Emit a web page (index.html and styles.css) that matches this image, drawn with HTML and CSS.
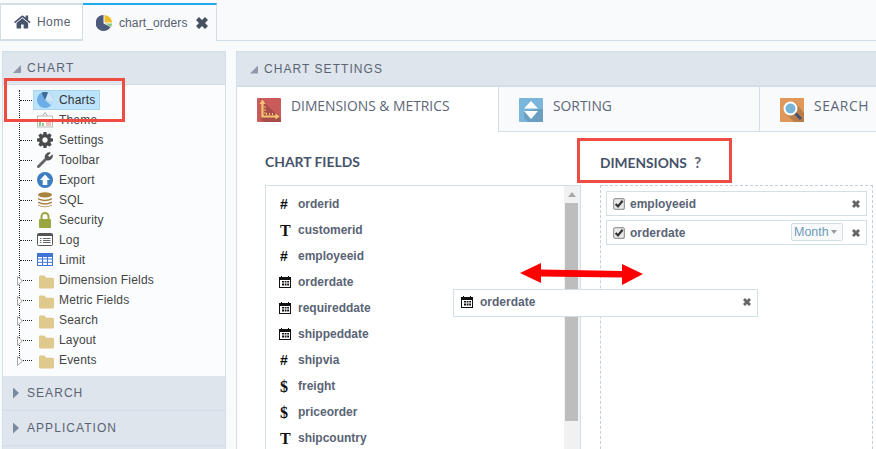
FILE: index.html
```html
<!DOCTYPE html>
<html lang="en">
<head>
<meta charset="utf-8">
<title>chart_orders</title>
<link rel="stylesheet" href="styles.css">
</head>
<body>
<svg class="defs" width="0" height="0">
  <symbol id="x" viewBox="0 0 12 12"><path d="M3 0 6 3 9 0 12 3 9 6 12 9 9 12 6 9 3 12 0 9 3 6 0 3Z"/></symbol>
  <symbol id="folder" viewBox="0 0 16 14"><path d="M0 1.500Q0 0 1.500 0H5Q6 0 7 1.500L7.600 2.500H14.500Q16 2.500 16 4V12.500Q16 14 14.500 14H1.500Q0 14 0 12.500Z" fill="#e0c98c"/></symbol>
  <symbol id="cal" viewBox="0 0 12 12"><path d="M0 1H2V0H3V1H9V0H10V1H12V12H0ZM1 4V11H11V4Z" fill="#111"/><path d="M3 5H5V6.500H3ZM5.700 5H7.500V6.500H5.700ZM8.200 5H10V6.500H8.200ZM3 7.500H5V9.500H3ZM5.700 7.500H7.500V9.500H5.700ZM8.200 7.500H10V9.500H8.200Z" fill="#111"/></symbol>
  <symbol id="chk" viewBox="0 0 12 12"><rect x=".6" y=".6" width="10.800" height="10.800" rx="2" fill="#e9e9e9" stroke="#9a9a9a" stroke-width="1.200"/><path d="M2.600 6 5 8.400 9.600 2.800" fill="none" stroke="#333" stroke-width="2.200"/></symbol>
  <symbol id="exp" viewBox="0 0 6 10"><path d="M.5 .5 5.500 5 .5 9.500Z" fill="#fff" stroke="#a8a8a8"/></symbol>
</svg>

<header class="tabs">
  <div class="tab tab-home">
    <svg class="ico-home" viewBox="0 0 1792 1792"><path fill="#47536b" d="M1408 992v480q0 26-19 45t-45 19h-384v-384h-256v384h-384q-26 0-45-19t-19-45v-480q0-1 .5-3t.5-3l575-474 575 474q1 2 1 6zm223-69l-62 74q-8 9-21 11h-3q-13 0-21-7l-692-577-692 577q-12 8-24 7-13-2-21-11l-62-74q-8-10-7-23.5t11-22.5l719-599q32-26 76-26t76 26l244 204v-195q0-14 9-23t23-9h192q14 0 23 9t9 23v408l219 182q10 8 11 22t-7 23z"/></svg>
    <span>Home</span>
  </div>
  <div class="tab tab-chart">
    <svg class="ico-pie" viewBox="0 0 16 16"><path fill="#4d5a7c" d="M7.500 0V8.500L14.500 12A8 8 0 1 1 7.500 0Z"/><path fill="#eebd2b" d="M8.500 0A8 8 0 0 1 16 7.500H8.500Z"/><path fill="#84c77a" d="M9 8.500H16A8 8 0 0 1 15 12Z"/></svg>
    <span>chart_orders</span>
    <svg class="x-tab"><use href="#x"/></svg>
  </div>
</header>

<main class="main">
  <aside class="side">
    <div class="bar bar-open"><i class="tri-open"></i>CHART</div>
    <ul class="tree">
      <li class="node"><span class="label sel"><svg class="ni" viewBox="0 0 16 16"><circle cx="8" cy="8" r="8" fill="#6cade8"/><path d="M8 8 11 .6A8 8 0 0 1 15.800 10Z" fill="#d2e5f8"/><path d="M8 8 4.500 .8A8 8 0 0 1 11 .6Z" fill="#3d6a96"/><path d="M8 8 15.800 10A8 8 0 0 1 14 13.300Z" fill="#bde3fb"/></svg>Charts</span></li>
      <li class="node"><span class="label"><svg class="ni" viewBox="0 0 16 16"><path d="M8 .5 5.500 4M8 .5 10.500 4" stroke="#aaa" fill="none"/><rect x=".5" y="4" width="15" height="11" fill="#fff" stroke="#bbb"/><path d="M2 9h2v5H2zM5 11h2v3H5z" fill="#8fc98f"/><path d="M9 9h5M9 11h5M9 13h5" stroke="#e58a7c"/></svg>Theme</span></li>
      <li class="node"><span class="label"><svg class="ni" viewBox="128 128 1536 1536"><path fill="#4a4a4a" d="M1152 896q0-106-75-181t-181-75-181 75-75 181 75 181 181 75 181-75 75-181zm512-109v222q0 12-8 23t-20 13l-185 28q-19 54-39 91 35 50 107 138 10 12 10 25t-9 23q-27 37-99 108t-94 71q-12 0-26-9l-138-108q-44 23-91 38-16 136-29 186-7 28-36 28h-222q-14 0-24.500-8.500t-11.500-21.500l-28-184q-49-16-90-37l-141 107q-10 9-25 9-14 0-25-11-126-114-165-168-7-10-7-23 0-12 8-23 15-21 51-66.500t54-70.500q-27-50-41-99l-183-27q-13-2-21-12.500t-8-23.500v-222q0-12 8-23t19-13l186-28q14-46 39-92-40-57-107-138-10-12-10-24 0-10 9-23 26-36 98.500-107.500t94.500-71.500q13 0 26 10l138 107q44-23 91-38 16-136 29-186 7-28 36-28h222q14 0 24.500 8.500t11.500 21.500l28 184q49 16 90 37l142-107q9-9 24-9 13 0 25 10 129 119 165 170 7 8 7 22 0 12-8 23-15 21-51 66.500t-54 70.500q26 50 41 98l183 28q13 2 21 12.500t8 23.500z"/></svg>Settings</span></li>
      <li class="node"><span class="label"><svg class="ni" viewBox="0 0 16 16"><path d="M1.500 14.500 8.500 7.500" stroke="#666" stroke-width="3" stroke-linecap="round"/><path d="M8 6.500A4.500 4.500 0 0 1 14 .800L11 3.500 12.500 5 15.500 2.300A4.500 4.500 0 0 1 9.800 8.200Z" fill="#555"/></svg>Toolbar</span></li>
      <li class="node"><span class="label"><svg class="ni" viewBox="0 0 16 16"><circle cx="8" cy="8" r="8" fill="#3c7fc0"/><path d="M8 2.500 13 8H10.300V13H5.700V8H3Z" fill="#fff"/></svg>Export</span></li>
      <li class="node"><span class="label"><svg class="ni" viewBox="0 0 16 16"><ellipse cx="8" cy="2.800" rx="7" ry="2.600" fill="#a8823f"/><path d="M1 6Q8 9.500 15 6V7.500Q8 11 1 7.500ZM1 9.500Q8 13 15 9.500V11Q8 14.500 1 11ZM1 12.800Q8 16.300 15 12.800V13.500Q8 17 1 13.500Z" fill="#a8823f"/></svg>SQL</span></li>
      <li class="node"><span class="label"><svg class="ni" viewBox="0 0 16 16"><path d="M4.500 7V4.500A3.500 3.500 0 0 1 11.500 4.500V7" fill="none" stroke="#9aa63f" stroke-width="2"/><rect x="2" y="7" width="12" height="9" rx="1" fill="#9aa63f"/></svg>Security</span></li>
      <li class="node"><span class="label"><svg class="ni" viewBox="0 0 16 16"><rect x=".5" y="1.500" width="15" height="12" rx="1" fill="#fff" stroke="#555"/><path d="M.5 3h15" stroke="#555" stroke-width="2"/><path d="M3 6.500h1.500M3 8.500h1.500M3 10.500h1.500M6 6.500h7.500M6 8.500h7.500M6 10.500h7.500" stroke="#666"/></svg>Log</span></li>
      <li class="node"><span class="label"><svg class="ni" viewBox="0 0 16 16"><rect x=".5" y="1.500" width="15" height="12" fill="#fff" stroke="#3f74d8"/><path d="M0 2h16v2.500H0zM.5 7h15M.5 10.300h15M5.500 2v11M10.500 2v11" stroke="#3f74d8" fill="#3f74d8"/></svg>Limit</span></li>
      <li class="node"><svg class="exp"><use href="#exp"/></svg><span class="label"><svg class="ni fi"><use href="#folder"/></svg>Dimension Fields</span></li>
      <li class="node"><svg class="exp"><use href="#exp"/></svg><span class="label"><svg class="ni fi"><use href="#folder"/></svg>Metric Fields</span></li>
      <li class="node"><svg class="exp"><use href="#exp"/></svg><span class="label"><svg class="ni fi"><use href="#folder"/></svg>Search</span></li>
      <li class="node"><svg class="exp"><use href="#exp"/></svg><span class="label"><svg class="ni fi"><use href="#folder"/></svg>Layout</span></li>
      <li class="node"><svg class="exp"><use href="#exp"/></svg><span class="label"><svg class="ni fi"><use href="#folder"/></svg>Events</span></li>
    </ul>
    <div class="bar bar-closed"><i class="tri-closed"></i>SEARCH</div>
    <div class="bar bar-closed"><i class="tri-closed"></i>APPLICATION</div>
    <div class="bar bar-rest"></div>
  </aside>

  <section class="content">
    <div class="bar bar-main"><i class="tri-open"></i>CHART SETTINGS</div>
    <nav class="ctabs">
      <div class="ctab active">
        <svg class="ti" viewBox="0 0 24 24"><rect width="24" height="24" rx="1" fill="#c95b5b"/><path d="M6 3 24 21V24H7L4 21Z" fill="#a84c4c"/><path d="M5.500 5V18.500H20" fill="none" stroke="#f6c770" stroke-width="2.200"/><path d="M5.500 1.500 8.500 6H2.500ZM22.500 18.500 18.500 21.500V15.500Z" fill="#f6c770"/><path d="M7 9H9M7 12H9M7 15H9M9.500 15V17M12.500 15V17M15.500 15V17" stroke="#f6c770"/></svg>
        DIMENSIONS &amp; METRICS
      </div>
      <div class="ctab">
        <svg class="ti" viewBox="0 0 24 24"><rect width="24" height="24" rx="1" fill="#7ab5da"/><path d="M19 11H24V24H9L5 20V13Z" fill="#6b9fbf"/><path d="M12 3 19 10.500H5ZM5 13H19L12 21Z" fill="#fff"/></svg>
        SORTING
      </div>
      <div class="ctab">
        <svg class="ti" viewBox="0 0 24 24"><rect width="24" height="24" rx="1" fill="#e0985a"/><path d="M6 16 15 4 24 15V24H14Z" fill="#bb7c4c"/><circle cx="10.500" cy="10.500" r="6" fill="#76b4d8" stroke="#fff" stroke-width="2"/><path d="M15.500 15.500 21 21" stroke="#46536d" stroke-width="3"/></svg>
        SEARCH
      </div>
    </nav>
    <div class="cols">
      <div class="col-fields">
        <h2 class="col-title">CHART FIELDS</h2>
        <div class="fieldbox">
          <ul class="fields">
            <li class="field"><span class="ft ft-h">#</span>orderid</li>
            <li class="field"><span class="ft ft-s">T</span>customerid</li>
            <li class="field"><span class="ft ft-h">#</span>employeeid</li>
            <li class="field"><svg class="ft-cal"><use href="#cal"/></svg>orderdate</li>
            <li class="field"><svg class="ft-cal"><use href="#cal"/></svg>requireddate</li>
            <li class="field"><svg class="ft-cal"><use href="#cal"/></svg>shippeddate</li>
            <li class="field"><span class="ft ft-h">#</span>shipvia</li>
            <li class="field"><span class="ft ft-s">$</span>freight</li>
            <li class="field"><span class="ft ft-s">$</span>priceorder</li>
            <li class="field"><span class="ft ft-s">T</span>shipcountry</li>
          </ul>
          <div class="scroll"><i class="sc-up"></i><i class="sc-thumb"></i></div>
        </div>
      </div>
      <div class="col-dims">
        <h2 class="col-title col-title-dims">DIMENSIONS <span class="q">?</span></h2>
        <div class="dimbox">
          <div class="dim"><svg class="chk"><use href="#chk"/></svg><span class="dim-name">employeeid</span><svg class="x-sm"><use href="#x"/></svg></div>
          <div class="dim"><svg class="chk"><use href="#chk"/></svg><span class="dim-name">orderdate</span><span class="month">Month<i class="caret"></i></span><svg class="x-sm"><use href="#x"/></svg></div>
        </div>
      </div>
    </div>
  </section>
</main>

<div class="drag"><svg class="ft-cal"><use href="#cal"/></svg><span class="dim-name">orderdate</span><svg class="x-sm"><use href="#x"/></svg></div>
<svg class="arrow" viewBox="0 0 123 22"><path fill="#f00" d="M0 10 21 0V6.500L102 8V1L123 11 102 22V14.500L21 13.500V20Z"/></svg>
<div class="mark mark-charts"></div>
<div class="mark mark-dims"></div>
</body>
</html>
```

FILE: styles.css
```css
* { box-sizing: border-box; }
html, body { margin: 0; height: 449px; overflow: hidden; }
body { position: relative; background: #f8fafc; font-family: "Liberation Sans", Arial, sans-serif; font-size: 12px; color: #47536b; }
.defs { position: absolute; }
ul { list-style: none; margin: 0; padding: 0; }

.tabs { display: flex; height: 41px; padding-top: 3px; border-bottom: 1px solid #d3dfe6; }
.tab { display: flex; align-items: center; font-size: 12px; color: #56606f; }
.tab-home { width: 83px; letter-spacing: .45px; background: #fff; border: 1px solid #d3dfe6; border-top-width: 2px; padding-left: 13px; }
.ico-home { width: 18px; height: 18px; margin-right: 5px; }
.tab-chart { width: 134px; height: 38px; letter-spacing: .1px; border-top: 2px solid #1fa9ee; border-right: 1px solid #d3dfe6; background: #f8fafc; padding-left: 13px; }
.ico-pie { width: 16px; height: 16px; margin-right: 7px; }
.x-tab { width: 12px; height: 12px; margin-left: 8px; fill: #47505e; }

.main { display: flex; gap: 10px; height: 408px; padding: 10px 0 0 2px; }
.side { display: flex; flex-direction: column; width: 224px; flex: none; border: 1px solid #d3dfe6; border-width: 1px 1px 0 1px; background: #fbfcfe; }
.content { flex: 1; min-width: 0; border: 1px solid #d3dfe6; border-width: 1px 0 0 1px; background: #fff; }

.bar { display: flex; align-items: center; flex: none; background: #dee5ed; letter-spacing: 1.05px; color: #5b6373; font-size: 12px; }
.bar-open { height: 33px; padding-left: 8px; border-bottom: 1px solid #d3dfe6; letter-spacing: 1.3px; }
.bar-closed { height: 35px; padding-left: 10px; border-bottom: 1px solid #d3dfe6; }
.bar-rest { flex: 1; }
.bar-main { height: 35px; padding-left: 11px; border-bottom: 2px solid #d3dfe6; }
.tri-open { width: 8px; height: 8px; margin: 2px 6px 0 2px; background: #8f99a8; clip-path: polygon(100% 0, 100% 100%, 0 100%); }
.tri-closed { width: 6px; height: 11px; margin: 0 8px 0 0; background: #7b8aa0; clip-path: polygon(0 0, 100% 50%, 0 100%); }

.tree { position: relative; flex: none; height: 291px; padding-top: 5px; }
.tree::before { content: ""; position: absolute; left: 16px; top: 5px; height: 272px; border-left: 1px dotted #222; }
.node { position: relative; height: 20px; display: flex; align-items: center; padding-left: 30px; }
.node::before { content: ""; position: absolute; left: 17px; top: 10px; width: 12px; border-top: 1px dotted #222; }
.exp { position: absolute; left: 14px; top: 6px; width: 6px; height: 10px; }
.label { display: flex; align-items: center; height: 20px; padding: 0 2px 0 4px; letter-spacing: .18px; color: #444; white-space: nowrap; }
.sel { background: #bde3fb; border: 1px solid #a9d4ef; color: #333; padding-left: 3px; width: 67px; }
.ni { width: 16px; height: 16px; margin-right: 6px; flex: none; }
.fi { width: 15px; height: 14px; margin: 3px 5px 0 2px; }

.ctabs { display: flex; height: 45px; }
.ctab { width: 261px; flex: none; display: flex; align-items: flex-start; padding: 11px 0 0 20px; gap: 10px; font-family: "Open Sans", sans-serif; font-size: 13.850px; line-height: 16px; color: #5c6678; background: #f8fafc; border-right: 1.500px solid #d3dfe6; border-bottom: 1.500px solid #d3dfe6; }
.ctab.active { width: 262px; background: #fff; border-bottom: 0; }
.ctab:last-child { flex: 1; width: auto; min-width: 0; border-right: 0; letter-spacing: .6px; }

.ti { width: 24px; height: 24px; flex: none; }

.cols { display: flex; }
.col-fields { width: 344px; flex: none; padding-left: 28px; }
.col-dims { flex: 1; min-width: 0; padding-left: 19px; }
.col-title { margin: 0; height: 53px; padding-top: 21px; font-family: Lato, sans-serif; font-size: 13.900px; font-weight: 700; line-height: 18px; color: #47536b; }
.col-title-dims { font-size: 13.750px; }
.q { margin-left: 4px; font-size: 15px; color: #5b6373; }

.fieldbox { display: flex; width: 316px; height: 264px; border: 1.500px solid #d3dfe6; border-bottom: 0; }
.fields { flex: 1; padding-top: 5px; overflow: hidden; }
.field { display: flex; align-items: center; height: 26px; padding-left: 14px; font-weight: 700; color: #5a6475; }
.ft { width: 18px; font-weight: 700; color: #111; }
.ft-h { font-size: 14px; }
.ft-s { font-family: "Liberation Serif", serif; font-size: 16px; margin-top: 2px; }
.ft-cal { width: 12px; height: 12px; margin: 0 7px 0 -1px; flex: none; }
.scroll { position: relative; width: 16px; background: #f1f1f1; }
.scroll i { position: absolute; display: block; }
.sc-up { left: 4px; top: 6px; width: 0; height: 0; border: 4px solid transparent; border-top: 0; border-bottom: 5px solid #a9a9a9; }
.sc-thumb { left: 1px; top: 17px; width: 13px; height: 218px; background: #bdbdbd; }

.dimbox { width: 273px; height: 264px; padding: 5px; border: 1px dashed #c3cde3; border-bottom: 0; display: flex; flex-direction: column; gap: 4px; }
.dim { display: flex; align-items: center; height: 25px; padding: 0 6px; background: #fff; border: 1px solid #d3dfe6; flex: none; }
.chk { width: 12px; height: 12px; margin-right: 5px; flex: none; }
.dim-name { flex: 1; font-weight: 700; color: #5a6475; }
.x-sm { width: 8px; height: 8px; margin-left: 9px; flex: none; fill: #666; }
.month { display: flex; align-items: center; height: 18px; width: 52px; padding-left: 2px; margin-top: -2px; background: #f8fafc; border: 1px solid #d3dfe6; border-radius: 2px; font-size: 12.500px; color: #6f9ab5; }
.caret { width: 0; height: 0; margin-left: 2px; border: 3.500px solid transparent; border-top: 4px solid #999; border-bottom: 0; }

.drag { position: absolute; left: 453px; top: 289px; width: 305px; height: 28px; display: flex; align-items: center; padding: 0 6px 2px 8px; background: #fff; border: 1.500px solid #d3dfe6; }
.arrow { position: absolute; left: 520px; top: 263px; width: 123px; height: 22px; }
.mark { position: absolute; border: 3px solid #ee4b43; }
.mark-charts { left: 4px; top: 78px; width: 121px; height: 44px; }
.mark-dims { left: 577px; top: 138px; width: 155px; height: 45px; }
```
